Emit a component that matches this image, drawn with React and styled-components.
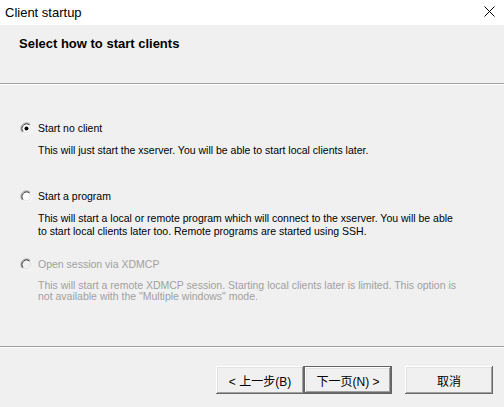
import React, { useState } from "react";
import styled, { createGlobalStyle } from "styled-components";

const GlobalStyle = createGlobalStyle`
  html, body {
    margin: 0;
    padding: 0;
    background: #f0f0f0;
  }
  body {
    font-family: "Liberation Sans", Arial, "Noto Sans CJK SC", sans-serif;
  }
`;

const Window = styled.div`
  width: 504px;
  height: 407px;
  display: flex;
  flex-direction: column;
  background: #f0f0f0;
  overflow: hidden;
`;

const TitleBar = styled.div`
  height: 25px;
  flex: none;
  background: #fff;
  display: flex;
  align-items: center;
  justify-content: space-between;
  padding: 0 9px 0 5px;
  font-size: 13px;
  color: #000;
`;

const CloseButton = styled.div`
  width: 12px;
  height: 12px;
  display: flex;
  align-items: center;
  justify-content: center;
  margin-top: -3px;
`;

const Header = styled.div`
  height: 59px;
  flex: none;
  box-sizing: border-box;
  padding: 11px 0 0 19px;
  border-bottom: 1px solid #a0a0a0;
  box-shadow: 0 1px 0 #ffffff;
`;

const HeaderTitle = styled.div`
  font-size: 13px;
  font-weight: bold;
  line-height: 16px;
  color: #000;
`;

const Body = styled.div`
  flex: 1;
  padding: 36px 0 0 20px;
`;

const Option = styled.div`
  height: 68px;
  color: ${(p) => (p.$disabled ? "#a0a0a0" : "#000")};
`;

const OptionRow = styled.label`
  display: flex;
  align-items: center;
  gap: 5px;
  height: 16px;
  font-size: 10.5px;
  line-height: 16px;
  cursor: ${(p) => (p.$disabled ? "default" : "pointer")};
`;

const Description = styled.div`
  margin: 8px 0 0 18px;
  font-size: 10.5px;
  line-height: ${(p) => (p.$disabled ? "11px" : "13px")};
  white-space: nowrap;
`;

const Footer = styled.div`
  height: 61px;
  flex: none;
  box-sizing: border-box;
  border-top: 1px solid #a0a0a0;
  box-shadow: inset 0 1px 0 #ffffff;
  padding: 19px 11px 0 0;
  display: flex;
  justify-content: flex-end;
  align-items: flex-start;
`;

const ButtonPair = styled.div`
  display: flex;
  margin-right: 13px;
`;

const Button = styled.button`
  width: 88px;
  height: 28px;
  box-sizing: border-box;
  background: #f0f0f0;
  font-family: "Liberation Sans", Arial, "Noto Sans CJK SC", sans-serif;
  font-size: 12px;
  color: #000;
  padding: 0;
  border: ${(p) => (p.$default ? "1px solid #646464" : "0")};
  box-shadow: inset -1px -1px 0 #696969, inset 1px 1px 0 #ffffff,
    inset -2px -2px 0 #a0a0a0, inset 2px 2px 0 #e3e3e3;
  cursor: pointer;
`;

const RadioIcon = ({ checked, disabled }) => (
  <svg width="13" height="13" viewBox="0 0 13 13">
    <circle cx="6.5" cy="6.5" r="5.5" fill={disabled ? "#f0f0f0" : "#fff"} />
    <path d="M2.61 10.39 A5.5 5.5 0 0 1 10.39 2.61" stroke="#8a8a8a" strokeWidth="1" fill="none" />
    <path d="M10.39 2.61 A5.5 5.5 0 0 1 2.61 10.39" stroke="#ffffff" strokeWidth="1" fill="none" />
    <path d="M3.32 9.68 A4.5 4.5 0 0 1 9.68 3.32" stroke="#404040" strokeWidth="1" fill="none" />
    <path d="M9.68 3.32 A4.5 4.5 0 0 1 3.32 9.68" stroke="#dcdcdc" strokeWidth="1" fill="none" />
    {checked && <circle cx="6.5" cy="6.5" r="2" fill="#000" />}
  </svg>
);

const options = [
  {
    id: "none",
    label: "Start no client",
    lines: ["This will just start the xserver. You will be able to start local clients later."],
  },
  {
    id: "program",
    label: "Start a program",
    lines: [
      "This will start a local or remote program which will connect to the xserver. You will be able",
      "to start local clients later too. Remote programs are started using SSH.",
    ],
  },
  {
    id: "xdmcp",
    label: "Open session via XDMCP",
    disabled: true,
    lines: [
      "This will start a remote XDMCP session. Starting local clients later is limited. This option is",
      "not available with the \"Multiple windows\" mode.",
    ],
  },
];

export default function App() {
  const [selected, setSelected] = useState("none");

  return (
    <>
      <GlobalStyle />
      <Window>
        <TitleBar>
          <span>Client startup</span>
          <CloseButton>
            <svg width="11" height="11" viewBox="0 0 11 11">
              <path d="M0.5 0.5 L10.5 10.5 M10.5 0.5 L0.5 10.5" stroke="#000" strokeWidth="1" />
            </svg>
          </CloseButton>
        </TitleBar>
        <Header>
          <HeaderTitle>Select how to start clients</HeaderTitle>
        </Header>
        <Body>
          {options.map((opt) => (
            <Option key={opt.id} $disabled={opt.disabled}>
              <OptionRow
                $disabled={opt.disabled}
                onClick={() => !opt.disabled && setSelected(opt.id)}
              >
                <RadioIcon checked={selected === opt.id} disabled={opt.disabled} />
                {opt.label}
              </OptionRow>
              <Description $disabled={opt.disabled}>
                {opt.lines.map((line, i) => (
                  <div key={i}>{line}</div>
                ))}
              </Description>
            </Option>
          ))}
        </Body>
        <Footer>
          <ButtonPair>
            <Button>&lt; 上一步(B)</Button>
            <Button $default>下一页(N) &gt;</Button>
          </ButtonPair>
          <Button>取消</Button>
        </Footer>
      </Window>
    </>
  );
}
